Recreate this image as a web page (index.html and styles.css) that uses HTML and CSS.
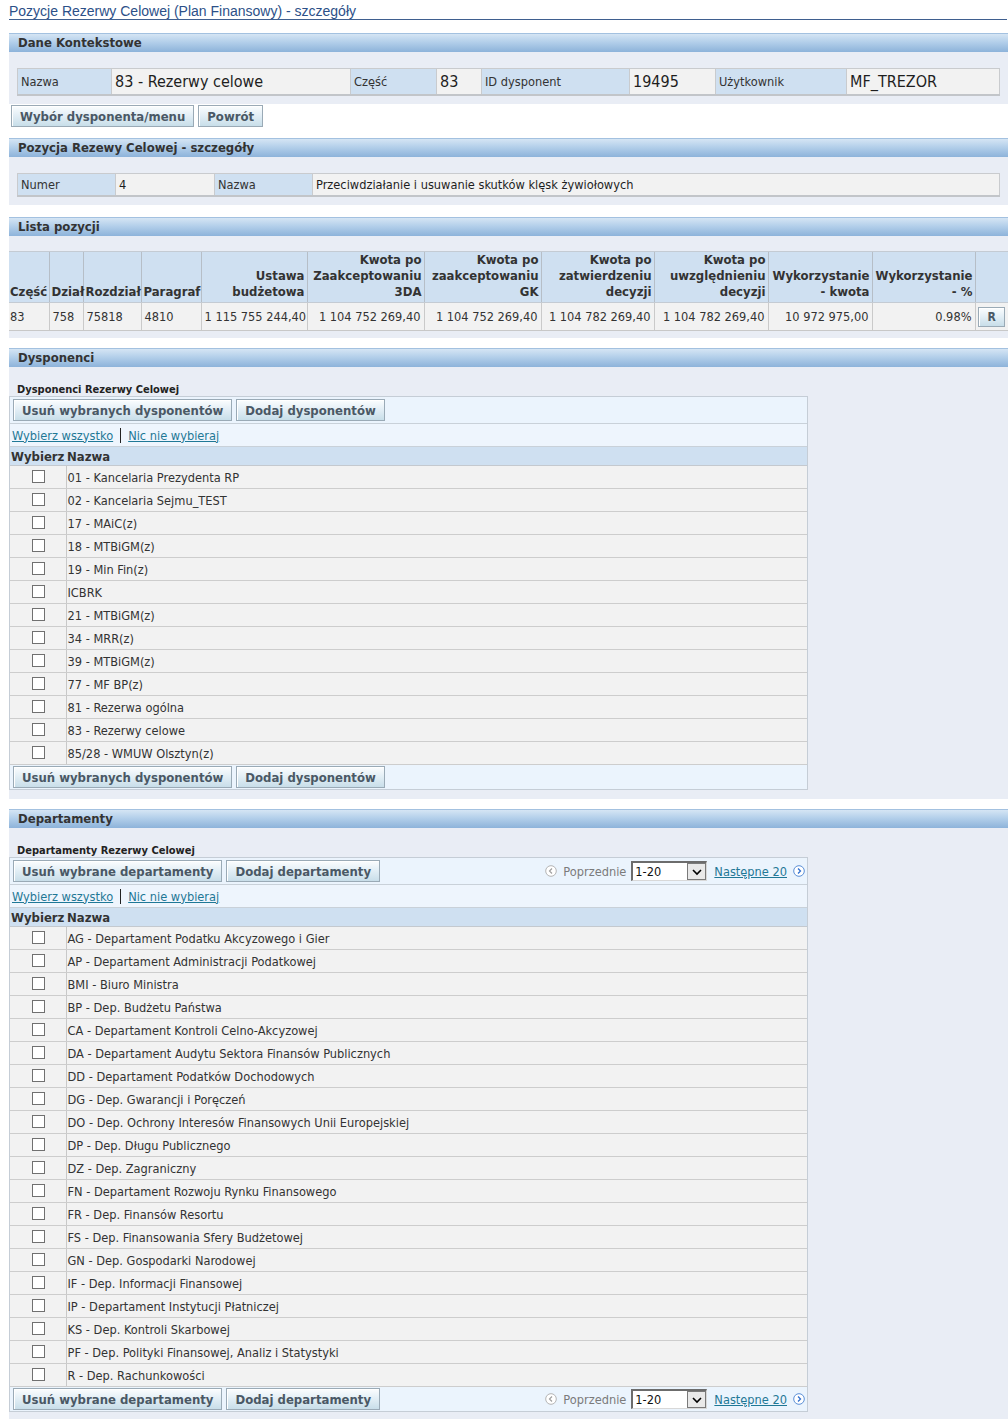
FILE: index.html
```html
<!DOCTYPE html>
<html lang="pl">
<head>
<meta charset="utf-8">
<title>Pozycje Rezerwy Celowej</title>
<link rel="stylesheet" href="styles.css">
</head>
<body>
<div class="page">
  <h1 class="title">Pozycje Rezerwy Celowej (Plan Finansowy) - szczegóły</h1>

  <section class="sec sec-first">
    <div class="sec-head">Dane Kontekstowe</div>
    <div class="sec-body pad-kv">
      <table class="kv kv-ctx">
        <colgroup><col style="width:94px"><col style="width:239px"><col style="width:86px"><col style="width:45px"><col style="width:148px"><col style="width:86px"><col style="width:131px"><col></colgroup>
        <tr>
          <td class="lbl">Nazwa</td><td class="val big">83 - Rezerwy celowe</td>
          <td class="lbl">Część</td><td class="val big">83</td>
          <td class="lbl">ID dysponent</td><td class="val big">19495</td>
          <td class="lbl">Użytkownik</td><td class="val big">MF_TREZOR</td>
        </tr>
      </table>
    </div>
  </section>
  <div class="btnrow">
    <button class="btn">Wybór dysponenta/menu</button>
    <button class="btn">Powrót</button>
  </div>

  <section class="sec sec-2">
    <div class="sec-head">Pozycja Rezewy Celowej - szczegóły</div>
    <div class="sec-body pad-kv">
      <table class="kv kv-small">
        <colgroup><col style="width:98px"><col style="width:99px"><col style="width:98px"><col></colgroup>
        <tr>
          <td class="lbl">Numer</td><td class="val">4</td>
          <td class="lbl">Nazwa</td><td class="val">Przeciwdziałanie i usuwanie skutków klęsk żywiołowych</td>
        </tr>
      </table>
    </div>
  </section>

  <section class="sec sec-3">
    <div class="sec-head">Lista pozycji</div>
    <div class="sec-body pad-list">
      <table class="grid">
        <colgroup>
          <col style="width:40px"><col style="width:34px"><col style="width:58px"><col style="width:60px"><col style="width:106px"><col style="width:117px"><col style="width:117px"><col style="width:113px"><col style="width:114px"><col style="width:104px"><col style="width:103px"><col>
        </colgroup>
        <tr class="ghead">
          <th class="l">Część</th><th class="l">Dział</th><th class="l">Rozdział</th><th class="l">Paragraf</th>
          <th>Ustawa<br>budżetowa</th>
          <th>Kwota po<br>Zaakceptowaniu<br>3DA</th>
          <th>Kwota po<br>zaakceptowaniu<br>GK</th>
          <th>Kwota po<br>zatwierdzeniu<br>decyzji</th>
          <th>Kwota po<br>uwzględnieniu<br>decyzji</th>
          <th>Wykorzystanie<br>- kwota</th>
          <th>Wykorzystanie<br>- %</th>
          <th></th>
        </tr>
        <tr class="grow">
          <td class="l">83</td><td class="l">758</td><td class="l">75818</td><td class="l">4810</td>
          <td>1 115 755 244,40</td><td>1 104 752 269,40</td><td>1 104 752 269,40</td><td>1 104 782 269,40</td><td>1 104 782 269,40</td><td>10 972 975,00</td><td>0.98%</td>
          <td class="c"><button class="btn btn-r">R</button></td>
        </tr>
      </table>
    </div>
  </section>

  <section class="sec sec-4">
    <div class="sec-head">Dysponenci</div>
    <div class="sec-body pad-box">
      <div class="subtitle">Dysponenci Rezerwy Celowej</div>
      <div class="box">
        <div class="bar">
          <div class="bar-btns"><button class="btn">Usuń wybranych dysponentów</button><button class="btn">Dodaj dysponentów</button></div>
        </div>
        <div class="links"><a href="#">Wybierz wszystko</a><span class="sep"></span><a href="#">Nic nie wybieraj</a></div>
        <table class="list">
          <colgroup><col style="width:56px"><col></colgroup>
          <tr class="lhead"><th>Wybierz</th><th>Nazwa</th></tr>
          <tr><td class="cbc"><input type="checkbox" class="cb"></td><td>01 - Kancelaria Prezydenta RP</td></tr>
          <tr><td class="cbc"><input type="checkbox" class="cb"></td><td>02 - Kancelaria Sejmu_TEST</td></tr>
          <tr><td class="cbc"><input type="checkbox" class="cb"></td><td>17 - MAiC(z)</td></tr>
          <tr><td class="cbc"><input type="checkbox" class="cb"></td><td>18 - MTBiGM(z)</td></tr>
          <tr><td class="cbc"><input type="checkbox" class="cb"></td><td>19 - Min Fin(z)</td></tr>
          <tr><td class="cbc"><input type="checkbox" class="cb"></td><td>ICBRK</td></tr>
          <tr><td class="cbc"><input type="checkbox" class="cb"></td><td>21 - MTBiGM(z)</td></tr>
          <tr><td class="cbc"><input type="checkbox" class="cb"></td><td>34 - MRR(z)</td></tr>
          <tr><td class="cbc"><input type="checkbox" class="cb"></td><td>39 - MTBiGM(z)</td></tr>
          <tr><td class="cbc"><input type="checkbox" class="cb"></td><td>77 - MF BP(z)</td></tr>
          <tr><td class="cbc"><input type="checkbox" class="cb"></td><td>81 - Rezerwa ogólna</td></tr>
          <tr><td class="cbc"><input type="checkbox" class="cb"></td><td>83 - Rezerwy celowe</td></tr>
          <tr><td class="cbc"><input type="checkbox" class="cb"></td><td>85/28 - WMUW Olsztyn(z)</td></tr>
        </table>
        <div class="bar bar-bottom">
          <div class="bar-btns"><button class="btn">Usuń wybranych dysponentów</button><button class="btn">Dodaj dysponentów</button></div>
        </div>
      </div>
    </div>
  </section>

  <section class="sec sec-5">
    <div class="sec-head">Departamenty</div>
    <div class="sec-body pad-box">
      <div class="subtitle">Departamenty Rezerwy Celowej</div>
      <div class="box">
        <div class="bar">
          <div class="bar-btns"><button class="btn">Usuń wybrane departamenty</button><button class="btn">Dodaj departamenty</button></div>
          <div class="pager">
            <svg class="pico" viewBox="0 0 12 12" width="12" height="12"><circle cx="6" cy="6" r="5.3" fill="#fff" stroke="#b4b4b4" stroke-width="1"/><path d="M7 3.5 L4.5 6 L7 8.5" fill="none" stroke="#a0a0a0" stroke-width="1.2"/></svg>
            <span class="prev">Poprzednie</span>
            <span class="sel"><span class="sel-txt">1-20</span><span class="sel-btn"><svg viewBox="0 0 10 8" width="10" height="8"><path d="M1 2 L5 6 L9 2" fill="none" stroke="#000" stroke-width="1.6"/></svg></span></span>
            <a href="#" class="next">Następne 20</a>
            <svg class="pico" viewBox="0 0 12 12" width="12" height="12"><circle cx="6" cy="6" r="5.3" fill="#fff" stroke="#5b8fd6" stroke-width="1"/><path d="M5 3.5 L7.5 6 L5 8.5" fill="none" stroke="#2f6fcf" stroke-width="1.3"/></svg>
          </div>
        </div>
        <div class="links"><a href="#">Wybierz wszystko</a><span class="sep"></span><a href="#">Nic nie wybieraj</a></div>
        <table class="list">
          <colgroup><col style="width:56px"><col></colgroup>
          <tr class="lhead"><th>Wybierz</th><th>Nazwa</th></tr>
          <tr><td class="cbc"><input type="checkbox" class="cb"></td><td>AG - Departament Podatku Akcyzowego i Gier</td></tr>
          <tr><td class="cbc"><input type="checkbox" class="cb"></td><td>AP - Departament Administracji Podatkowej</td></tr>
          <tr><td class="cbc"><input type="checkbox" class="cb"></td><td>BMI - Biuro Ministra</td></tr>
          <tr><td class="cbc"><input type="checkbox" class="cb"></td><td>BP - Dep. Budżetu Państwa</td></tr>
          <tr><td class="cbc"><input type="checkbox" class="cb"></td><td>CA - Departament Kontroli Celno-Akcyzowej</td></tr>
          <tr><td class="cbc"><input type="checkbox" class="cb"></td><td>DA - Departament Audytu Sektora Finansów Publicznych</td></tr>
          <tr><td class="cbc"><input type="checkbox" class="cb"></td><td>DD - Departament Podatków Dochodowych</td></tr>
          <tr><td class="cbc"><input type="checkbox" class="cb"></td><td>DG - Dep. Gwarancji i Poręczeń</td></tr>
          <tr><td class="cbc"><input type="checkbox" class="cb"></td><td>DO - Dep. Ochrony Interesów Finansowych Unii Europejskiej</td></tr>
          <tr><td class="cbc"><input type="checkbox" class="cb"></td><td>DP - Dep. Długu Publicznego</td></tr>
          <tr><td class="cbc"><input type="checkbox" class="cb"></td><td>DZ - Dep. Zagraniczny</td></tr>
          <tr><td class="cbc"><input type="checkbox" class="cb"></td><td>FN - Departament Rozwoju Rynku Finansowego</td></tr>
          <tr><td class="cbc"><input type="checkbox" class="cb"></td><td>FR - Dep. Finansów Resortu</td></tr>
          <tr><td class="cbc"><input type="checkbox" class="cb"></td><td>FS - Dep. Finansowania Sfery Budżetowej</td></tr>
          <tr><td class="cbc"><input type="checkbox" class="cb"></td><td>GN - Dep. Gospodarki Narodowej</td></tr>
          <tr><td class="cbc"><input type="checkbox" class="cb"></td><td>IF - Dep. Informacji Finansowej</td></tr>
          <tr><td class="cbc"><input type="checkbox" class="cb"></td><td>IP - Departament Instytucji Płatniczej</td></tr>
          <tr><td class="cbc"><input type="checkbox" class="cb"></td><td>KS - Dep. Kontroli Skarbowej</td></tr>
          <tr><td class="cbc"><input type="checkbox" class="cb"></td><td>PF - Dep. Polityki Finansowej, Analiz i Statystyki</td></tr>
          <tr><td class="cbc"><input type="checkbox" class="cb"></td><td>R - Dep. Rachunkowości</td></tr>
        </table>
        <div class="bar bar-bottom">
          <div class="bar-btns"><button class="btn">Usuń wybrane departamenty</button><button class="btn">Dodaj departamenty</button></div>
          <div class="pager">
            <svg class="pico" viewBox="0 0 12 12" width="12" height="12"><circle cx="6" cy="6" r="5.3" fill="#fff" stroke="#b4b4b4" stroke-width="1"/><path d="M7 3.5 L4.5 6 L7 8.5" fill="none" stroke="#a0a0a0" stroke-width="1.2"/></svg>
            <span class="prev">Poprzednie</span>
            <span class="sel"><span class="sel-txt">1-20</span><span class="sel-btn"><svg viewBox="0 0 10 8" width="10" height="8"><path d="M1 2 L5 6 L9 2" fill="none" stroke="#000" stroke-width="1.6"/></svg></span></span>
            <a href="#" class="next">Następne 20</a>
            <svg class="pico" viewBox="0 0 12 12" width="12" height="12"><circle cx="6" cy="6" r="5.3" fill="#fff" stroke="#5b8fd6" stroke-width="1"/><path d="M5 3.5 L7.5 6 L5 8.5" fill="none" stroke="#2f6fcf" stroke-width="1.3"/></svg>
          </div>
        </div>
      </div>
    </div>
  </section>
</div>
</body>
</html>
```

FILE: styles.css
```css
html, body {
  margin: 0;
  padding: 0;
  background: #ffffff;
}
body {
  font-family: "DejaVu Sans Condensed", "DejaVu Sans", sans-serif;
  font-size: 12.7px;
  color: #333333;
}
.page {
  padding-left: 9px;
}
.title {
  margin: 0;
  padding-top: 3px;
  font-family: "Liberation Sans", Arial, sans-serif;
  font-size: 14px;
  font-weight: normal;
  line-height: 16px;
  color: #2c5088;
  border-bottom: 1px solid #3f5f8f;
  margin-right: 1px;
}
.sec-first { margin-top: 13px; }
.sec-2 { margin-top: 11px; }
.sec-3 { margin-top: 12px; }
.sec-4 { margin-top: 10px; }
.sec-5 { margin-top: 10px; }

.sec-head {
  height: 18px;
  line-height: 18px;
  border-top: 1px solid #a3c1e0;
  background: linear-gradient(to bottom, #d5e5f4 0%, #b3cfea 45%, #8db3da 100%);
  font-weight: bold;
  font-size: 13px;
  color: #333333;
  padding-left: 9px;
}
.sec-body {
  background: #e9edf5;
}
.pad-kv {
  padding: 16px 8px 8px 8px;
}
.pad-list {
  padding: 15px 0 7px 0;
}
.pad-box {
  padding: 16px 0 9px 0;
}

/* key-value tables */
.kv {
  width: 100%;
  border-collapse: collapse;
  table-layout: fixed;
  border: 1px solid #c6c9cd;
  border-bottom: 2px solid #c2c5c9;
}
.kv td {
  border: 1px solid #c9cbce;
  padding: 0 3px;
  white-space: nowrap;
  overflow: hidden;
}
.kv .lbl {
  background: #cfe0f1;
  color: #333333;
}
.kv .val {
  background: #f2f2f2;
  color: #1e1e1e;
}
.kv-ctx td { height: 25px; }
.kv .big { font-size: 16px; }
.kv-small td { height: 21px; }

/* buttons */
.btnrow {
  display: flex;
  gap: 4px;
  padding: 1px 0 0 2px;
}
.btn {
  font-family: "DejaVu Sans Condensed", "DejaVu Sans", sans-serif;
  font-size: 13px;
  font-weight: bold;
  color: #4a5865;
  height: 22px;
  padding: 0 8px;
  margin: 0;
  border: 1px solid #9aaab6;
  box-shadow: inset 1px 1px 0 #ffffff;
  background: linear-gradient(to bottom, #fbfdfe 0%, #e4eff6 45%, #c8dee9 100%);
  cursor: pointer;
}

/* grid table */
.grid {
  width: 100%;
  border-collapse: collapse;
  table-layout: fixed;
}
.grid th {
  background: #cfe0f1;
  font-weight: bold;
  font-size: 13px;
  text-align: right;
  vertical-align: bottom;
  line-height: 16px;
  height: 48px;
  padding: 0 2px 2px 2px;
  border-left: 1px solid #b6bec7;
  border-top: 1px solid #c4cbd3;
  border-bottom: 1px solid #c4cbd3;
  white-space: nowrap;
}
.grid th:first-child { border-left: none; padding-left: 1px; }
.grid th.l, .grid td.l { text-align: left; }
.grid td {
  background: #f2f2f2;
  height: 27px;
  padding: 0 3px 0 3px;
  text-align: right;
  border-left: 1px solid #cacaca;
  border-bottom: 1px solid #c8c8c8;
  white-space: nowrap;
}
.grid td:first-child { border-left: none; padding-left: 1px; }
.grid td.c { text-align: center; padding: 0; }
.btn-r {
  width: 27px;
  height: 20px;
  padding: 0;
  font-size: 12px;
}

/* box lists */
.subtitle {
  font-size: 11px;
  font-weight: bold;
  line-height: 13px;
  height: 13px;
  padding-left: 8px;
  color: #222222;
}
.box {
  width: 799px;
  box-sizing: border-box;
  border: 1px solid #c5cdd6;
}
.bar {
  background: #ebf4fd;
  display: flex;
  justify-content: space-between;
  align-items: center;
  padding: 2px 2px 2px 3px;
  border-bottom: 1px solid #c9d1d9;
}
.bar-bottom {
  border-bottom: none;
  border-top: none;
  padding: 1px 2px 1px 3px;
}
.bar-btns {
  display: flex;
  gap: 4px;
}
.links {
  background: #eef5fd;
  height: 22px;
  padding-left: 2px;
  display: flex;
  align-items: center;
}
.links a {
  color: #1f7896;
  text-decoration: underline;
}
.sep {
  display: inline-block;
  width: 1px;
  height: 15px;
  background: #222222;
  margin: 0 7px 0 7px;
}
.list {
  width: 100%;
  border-collapse: collapse;
  table-layout: fixed;
}
.list th {
  background: #cfe0f1;
  text-align: left;
  font-weight: bold;
  font-size: 13px;
  height: 18px;
  padding: 0 1px;
  border-top: 1px solid #c9d1d9;
  border-bottom: 1px solid #c4c9cf;
  white-space: nowrap;
}
.list td {
  background: #f2f2f2;
  height: 22px;
  padding: 0 1px;
  border-bottom: 1px solid #cdcdcd;
  white-space: nowrap;
}
.list td.cbc {
  text-align: center;
  border-right: 1px solid #c8c8c8;
  padding: 0;
}
.cb {
  appearance: none;
  -webkit-appearance: none;
  width: 13px;
  height: 13px;
  margin: 0 0 0 2px;
  border: 1px solid #707070;
  background: #ffffff;
  vertical-align: middle;
  position: relative;
  top: -2px;
}

/* pager */
.pager {
  display: flex;
  align-items: center;
}
.pico { display: block; }
.prev {
  color: #7b7b7b;
  margin: 0 5px 0 6px;
}
.sel {
  display: flex;
  width: 76px;
  height: 20px;
  box-sizing: border-box;
  border-top: 2px solid #6c6c6c;
  border-left: 2px solid #6c6c6c;
  border-right: 1px solid #d8d8d8;
  border-bottom: 1px solid #d8d8d8;
  background: #ffffff;
}
.sel-txt {
  flex: 1;
  line-height: 17px;
  padding-left: 2px;
  color: #111111;
}
.sel-btn {
  width: 19px;
  box-sizing: border-box;
  border: 1px solid #7a7a7a;
  background: #e9e9e9;
  display: flex;
  align-items: center;
  justify-content: center;
}
.next {
  color: #1f7896;
  text-decoration: underline;
  margin: 0 6px 0 7px;
}
```
